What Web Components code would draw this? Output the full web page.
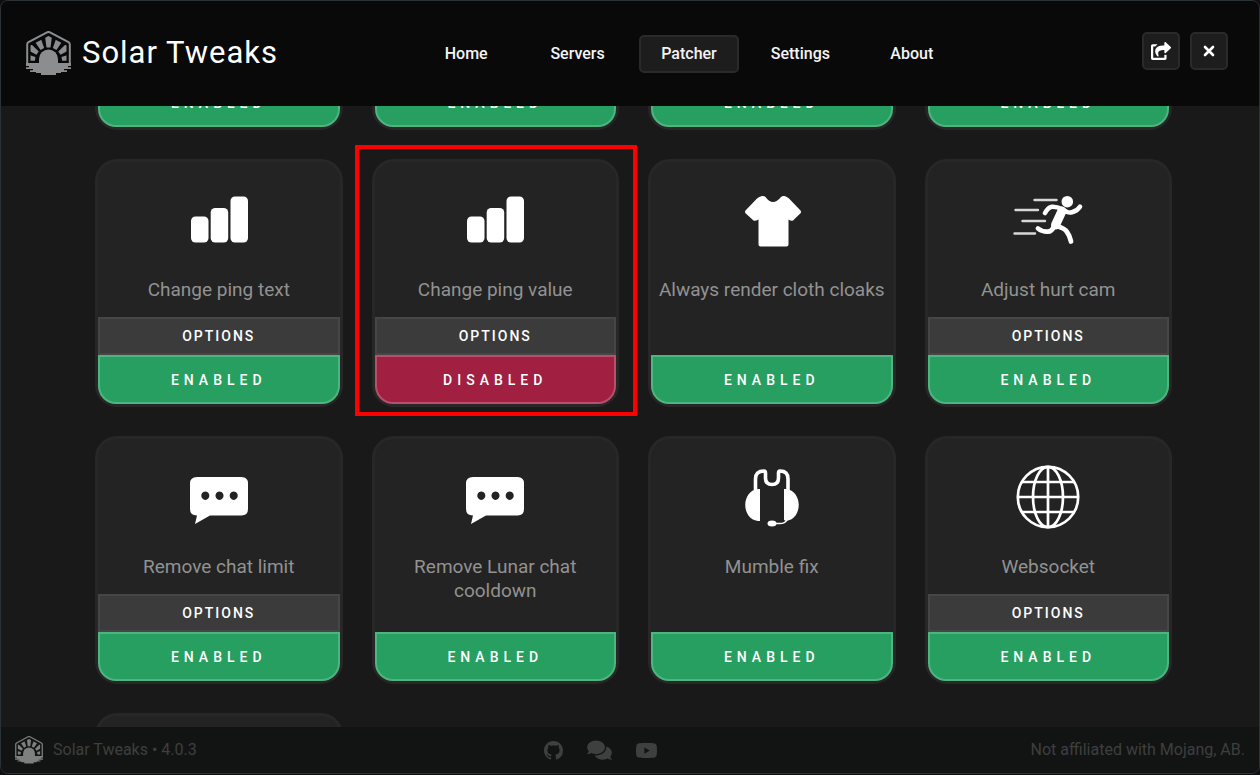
<!DOCTYPE html>
<html lang="en">
<head>
<meta charset="utf-8">
<title>Solar Tweaks</title>
<style>
  html, body { margin: 0; height: 100%; background: #0d0f10; }
  body { box-sizing: border-box; padding-bottom: 1px; font-family: Roboto, "Liberation Sans", sans-serif; color: #fff; }
</style>
</head>
<body>
<solar-app></solar-app>

<script>
const define = (name, html, setup) => {
  const template = document.createElement('template');
  template.innerHTML = html;
  customElements.define(name, class extends HTMLElement {
    connectedCallback() {
      if (this.shadowRoot) return;
      this.attachShadow({ mode: 'open' }).append(template.content.cloneNode(true));
      if (setup) setup(this, this.shadowRoot);
    }
  });
};

const wedge = a => `<path d="M20.5 16.5 L18 -2 L27 -2 L24.5 16.5 Z" transform="rotate(${a} 22.5 30)"/>`;
define('solar-logo', `
<style>
  :host { display: block; width: 45px; height: 45px; flex: none; }
  svg { display: block; width: 100%; height: 100%; }
</style>
<svg viewBox="0 0 45 45" fill="currentColor" aria-hidden="true">
  <defs><clipPath id="inner"><path d="M22.5 5 L40.5 14.5 V30.5 H4.5 V14.5 Z"/></clipPath></defs>
  <path d="M1.2 32 V13.5 Q1.2 12 2.5 11.2 L21 1.3 Q22.5 .6 24 1.3 L42.5 11.2 Q43.8 12 43.8 13.5 V32" fill="none" stroke="currentColor" stroke-width="2"/>
  <g clip-path="url(#inner)">${[-81, -54, -27, 0, 27, 54, 81].map(wedge).join('')}</g>
  <path d="M13 32 V28 A9.5 9.5 0 0 1 32 28 V32 Z"/>
  <path d="M0 32 H45 V35 H42 V36.3 H45 V38 H38 V39.3 H41 V41 H35 V42 H30 V44 H15 V42 H10 V41 H4 V39.3 H7 V38 H0 V36.3 H3 V35 H0 Z"/>
</svg>`);

define('nav-tab', `
<style>
  :host { display: block; }
  a { display: block; box-sizing: border-box; height: 38px; border: 2px solid transparent; border-radius: 5px;
      color: #f4f4f4; font-size: 16px; font-weight: 500; line-height: 34px; text-align: center; text-decoration: none; }
  :host([current]) a { background: #1e1d1e; border-color: #2a2a2a; }
</style>
<a href="#"><slot></slot></a>`);

define('icon-button', `
<style>
  :host { display: block; }
  button { display: grid; place-items: center; width: 38px; height: 38px; padding: 0; color: #fff;
           background: #1e1d1e; border: 2px solid #2a2a2a; border-radius: 5px; }
</style>
<button type="button"><slot></slot></button>`,
(host, root) => root.querySelector('button').setAttribute('aria-label', host.getAttribute('label')));

define('app-header', `
<style>
  :host { display: grid; grid-template-columns: 390px minmax(0, 546px) 1fr; align-items: center;
          box-sizing: border-box; height: 105px; flex: none; padding: 0 31px 0 25px; background: #090909; }
  .brand { display: flex; align-items: center; gap: 11px; color: #8b8d8e; }
  h1 { margin: 0; padding-bottom: 2px; color: #fff; font-size: 31px; font-weight: 400; line-height: 38px; letter-spacing: 1px; }
  nav { display: grid; grid-template-columns: repeat(5, 1fr); gap: 11px; }
  .actions { display: flex; justify-content: flex-end; gap: 10px; padding-bottom: 6px; }
  svg { display: block; }
</style>
<div class="brand"><solar-logo></solar-logo><h1>Solar Tweaks</h1></div>
<nav>
  <nav-tab>Home</nav-tab><nav-tab>Servers</nav-tab><nav-tab current>Patcher</nav-tab>
  <nav-tab>Settings</nav-tab><nav-tab>About</nav-tab>
</nav>
<div class="actions">
  <icon-button label="Open externally"><svg width="20" height="18" viewBox="0 0 576 512" fill="currentColor"><path d="M568.482 177.448L424.479 313.433C409.3 327.768 384 317.14 384 295.985v-71.963c-144.575.97-205.566 35.113-164.775 171.353 4.483 14.973-12.846 26.567-25.006 17.33C155.252 383.105 120 326.488 120 269.339c0-143.937 117.599-172.5 264-173.312V24.012c0-21.174 25.317-31.768 40.479-17.448l144.003 135.988c10.02 9.463 10.028 25.425 0 34.896zM384 379.128V448H64V128h50.916a11.99 11.99 0 0 0 8.648-3.693c14.953-15.568 32.237-27.89 51.014-37.676C185.708 80.83 181.584 64 169.033 64H48C21.49 64 0 85.49 0 112v352c0 26.51 21.49 48 48 48h352c26.51 0 48-21.49 48-48v-88.806c0-8.288-8.197-14.066-16.011-11.302a71.83 71.83 0 0 1-34.189 3.377c-7.27-1.046-13.8 4.514-13.8 11.859z"/></svg></icon-button>
  <icon-button label="Close"><svg width="12" height="12" viewBox="0 0 12 12" fill="none" stroke="currentColor" stroke-width="2.6" stroke-linecap="round"><path d="M2 2 L10 10 M10 2 L2 10"/></svg></icon-button>
</div>`);

const icons = {
  bars: '<rect x="4" y="28.5" width="17.5" height="26" rx="4.5"/><rect x="23.7" y="20" width="17.5" height="34.5" rx="4.5"/><rect x="43.5" y="8.5" width="17.5" height="46" rx="4.5"/>',
  shirt: '<path d="M22 8 Q24 7.500 25.500 9 Q29 14 33 14 Q37 14 41 9 Q42.500 7.500 44.500 8 Q47 8.500 49 10.500 L60.500 22.500 Q61.500 24 60.500 25.300 L53 32.500 Q51.500 33.500 48.500 31.500 V56.500 Q48.500 58.500 46.500 58.500 H20.500 Q18.500 58.500 18.500 56.500 V31.500 Q15 33.500 13.500 32.500 L5.500 25.300 Q4.500 24 5.500 22.500 L17 10.500 Q19 8.500 22 8 Z"/>',
  runner: '<circle cx="51.300" cy="13.700" r="5.800"/><g fill="none" stroke="currentColor" stroke-linecap="round" stroke-linejoin="round"><path d="M18.500 12 H40.500 M-.500 22 H22 M6.500 33 H29 M-1.500 45.500 H19" stroke-width="2.400" stroke="#d8d8d8"/><path d="M29 25 Q32 19.500 36 18.700 Q41 18.500 46 21 Q52 25.500 56 24.300 Q61 23 64 18.700" stroke-width="4.600"/><path d="M46 23 L39.500 37" stroke-width="9"/><path d="M38 38 Q36 44 31 43.700 Q26 43.700 22 40.500" stroke-width="4.800"/><path d="M41 38 Q49 40.500 51 44 Q54 48 55 53.500" stroke-width="4.800"/></g>',
  chat: '<path fill-rule="evenodd" d="M10 12 H54.500 Q61 12 61 18.500 V44 Q61 50.500 54.500 50.500 H23 L8 59 L10 50.500 Q3 50.500 3 44 V18.500 Q3 12 10 12 Z M18.300 26.500 a4 4.200 0 1 0 .010 0 Z M32.500 26.500 a4 4.200 0 1 0 .010 0 Z M46.700 26.500 a4 4.200 0 1 0 .010 0 Z"/>',
  headset: '<path d="M20 24 H18 C1 26 1 54 18 56 H20 Z M44 24 H46 C63 26 63 54 46 56 L44 55 Z"/><g fill="none" stroke="currentColor"><path d="M15.500 26 V14 Q15.500 6 24 6 Q25.500 6 25.500 8 V13 Q25.500 19.500 32 19.500 Q38.500 19.500 38.500 13 V8 Q38.500 6 40 6 Q48 6 48 14 V26" stroke-width="3.600"/><path d="M47 55 Q45 58.500 40 58.500 H34" stroke-width="1.500"/></g><ellipse cx="32" cy="58.500" rx="4.500" ry="3"/>',
  globe: '<g fill="none" stroke="currentColor" stroke-width="2.700"><circle cx="32" cy="32" r="30.200"/><ellipse cx="32" cy="32" rx="15" ry="30.200"/><path d="M32 2 V62 M2 32 H62 M6 17 H58 M6 47 H58"/></g>'
};

define('patch-card', `
<style>
  :host { display: flex; flex-direction: column; position: relative; box-sizing: border-box; height: 248px;
          padding-top: 26px; background: #232323; border: 3px solid #272727; border-radius: 22px; }
  .icon { display: block; width: 64px; height: 64px; flex: none; margin: 0 auto 26px; overflow: visible; }
  h2 { margin: 0; color: #929292; font-size: 19px; font-weight: 400; line-height: 24px; text-align: center; }
  .buttons { margin-top: auto; }
  button { display: block; box-sizing: border-box; width: 100%; padding: 0; color: #fff; font-family: inherit;
           font-size: 14px; font-weight: 500; text-align: center; }
  .options { height: 38px; background: #3b3b3b; border: 2px solid #464646; letter-spacing: 2px; }
  .toggle { height: 49px; background: #279f60; border: 2px solid #4fb580; border-radius: 0 0 18px 18px;
            letter-spacing: 5px; }
  .toggle.off { background: #a11f41; border-color: #b7506b; }
  .mark { position: absolute; inset: -17px -21px -12px -20px; border: 4px solid #f00; }
</style>
<svg class="icon" viewBox="0 0 64 64" fill="currentColor" aria-hidden="true"></svg>
<h2><slot></slot></h2>
<div class="buttons">
  <button type="button" class="options">OPTIONS</button>
  <button type="button" class="toggle">ENABLED</button>
</div>
<div class="mark"></div>`,
(host, root) => {
  root.querySelector('.icon').innerHTML = icons[host.getAttribute('icon')] || '';
  if (!host.hasAttribute('options')) root.querySelector('.options').remove();
  if (!host.hasAttribute('marked')) root.querySelector('.mark').remove();
  if (host.hasAttribute('disabled')) {
    const toggle = root.querySelector('.toggle');
    toggle.classList.add('off');
    toggle.textContent = 'DISABLED';
  }
});

define('patch-list', `
<style>
  :host { display: block; flex: 1 1 0; min-height: 0; overflow-y: auto; scrollbar-width: none; background: #191919; }
  .grid { display: grid; grid-template-columns: repeat(4, minmax(0, 1fr)); gap: 29px; padding: 0 87px 29px 94px; }
</style>
<div class="grid">
  <patch-card></patch-card><patch-card></patch-card><patch-card></patch-card><patch-card></patch-card>
  <patch-card icon="bars" options>Change ping text</patch-card>
  <patch-card icon="bars" options disabled marked>Change ping value</patch-card>
  <patch-card icon="shirt">Always render cloth cloaks</patch-card>
  <patch-card icon="runner" options>Adjust hurt cam</patch-card>
  <patch-card icon="chat" options>Remove chat limit</patch-card>
  <patch-card icon="chat">Remove Lunar chat cooldown</patch-card>
  <patch-card icon="headset">Mumble fix</patch-card>
  <patch-card icon="globe" options>Websocket</patch-card>
  <patch-card></patch-card>
</div>`);

define('app-footer', `
<style>
  :host { display: grid; grid-template-columns: 9fr auto 10fr; align-items: center; box-sizing: border-box;
          height: 46px; flex: none; padding: 0 14px; background: #121413; color: #3e3f3f; font-size: 16px; line-height: 20px; }
  .brand, .links { display: flex; align-items: center; }
  .brand { gap: 10px; }
  .links { gap: 24px; }
  solar-logo { width: 28px; height: 28px; color: #7e8080; }
  a { display: block; color: inherit; }
  svg { display: block; }
  .note { text-align: right; }
</style>
<div class="brand"><solar-logo></solar-logo><span>Solar Tweaks • 4.0.3</span></div>
<div class="links">
  <a href="#" aria-label="GitHub"><svg width="19" height="19" viewBox="0 0 16 16" fill="currentColor"><path d="M8 0C3.58 0 0 3.58 0 8c0 3.54 2.29 6.53 5.47 7.59.4.07.55-.17.55-.38 0-.19-.01-.82-.01-1.49-2.01.37-2.53-.49-2.69-.94-.09-.23-.48-.94-.82-1.13-.28-.15-.68-.52-.01-.53.63-.01 1.08.58 1.23.82.72 1.21 1.87.87 2.33.66.07-.52.28-.87.51-1.07-1.78-.2-3.64-.89-3.64-3.95 0-.87.31-1.59.82-2.15-.08-.2-.36-1.02.08-2.12 0 0 .67-.21 2.2.82.64-.18 1.32-.27 2-.27.68 0 1.36.09 2 .27 1.53-1.04 2.2-.82 2.2-.82.44 1.1.16 1.92.08 2.12.51.56.82 1.27.82 2.15 0 3.07-1.87 3.75-3.65 3.95.29.25.54.73.54 1.48 0 1.07-.01 1.93-.01 2.2 0 .21.15.46.55.38A8.013 8.013 0 0016 8c0-4.42-3.58-8-8-8z"/></svg></a>
  <a href="#" aria-label="Community chat"><svg width="25" height="22" viewBox="0 0 576 512" fill="currentColor"><path d="M416 192c0-88.400-93.100-160-208-160S0 103.600 0 192c0 34.300 14.100 65.900 38 92-13.400 30.200-35.500 54.200-35.800 54.500-2.200 2.300-2.800 5.700-1.500 8.700S4.800 352 8 352c36.600 0 66.900-12.300 88.700-25 32.200 15.700 70.300 25 111.300 25 114.900 0 208-71.600 208-160zm122 220c23.900-26 38-57.700 38-92 0-66.900-53.500-124.200-129.300-148.100.9 6.600 1.300 13.300 1.300 20.100 0 105.900-107.700 192-240 192-10.800 0-21.300-.8-31.700-1.900C207.800 439.600 281.800 480 368 480c41 0 79.100-9.200 111.300-25 21.800 12.700 52.100 25 88.700 25 3.200 0 6.100-1.900 7.300-4.800 1.300-2.900.7-6.300-1.500-8.700-.3-.3-22.400-24.200-35.800-54.500z"/></svg></a>
  <a href="#" aria-label="YouTube"><svg width="21" height="17" viewBox="15 50 546 412" fill="currentColor"><path d="M549.655 124.083c-6.281-23.650-24.787-42.276-48.284-48.597C458.781 64 288 64 288 64S117.220 64 74.629 75.486c-23.497 6.322-42.003 24.947-48.284 48.597-11.412 42.867-11.412 132.305-11.412 132.305s0 89.438 11.412 132.305c6.281 23.650 24.787 41.500 48.284 47.821C117.220 448 288 448 288 448s170.780 0 213.371-11.486c23.497-6.321 42.003-24.171 48.284-47.821 11.412-42.867 11.412-132.305 11.412-132.305s0-89.438-11.412-132.305zm-317.510 213.508V175.185l142.739 81.205-142.739 81.201z"/></svg></a>
</div>
<div class="note">Not affiliated with Mojang, AB.</div>`);

define('solar-app', `
<style>
  :host { display: flex; flex-direction: column; box-sizing: border-box; height: 100%; overflow: hidden;
          border: 1px solid #2b3235; border-radius: 8px; background: #191919; }
</style>
<app-header></app-header>
<patch-list></patch-list>
<app-footer></app-footer>`,
(host, root) => { root.querySelector('patch-list').scrollTop = 224; });
</script>
</body>
</html>
